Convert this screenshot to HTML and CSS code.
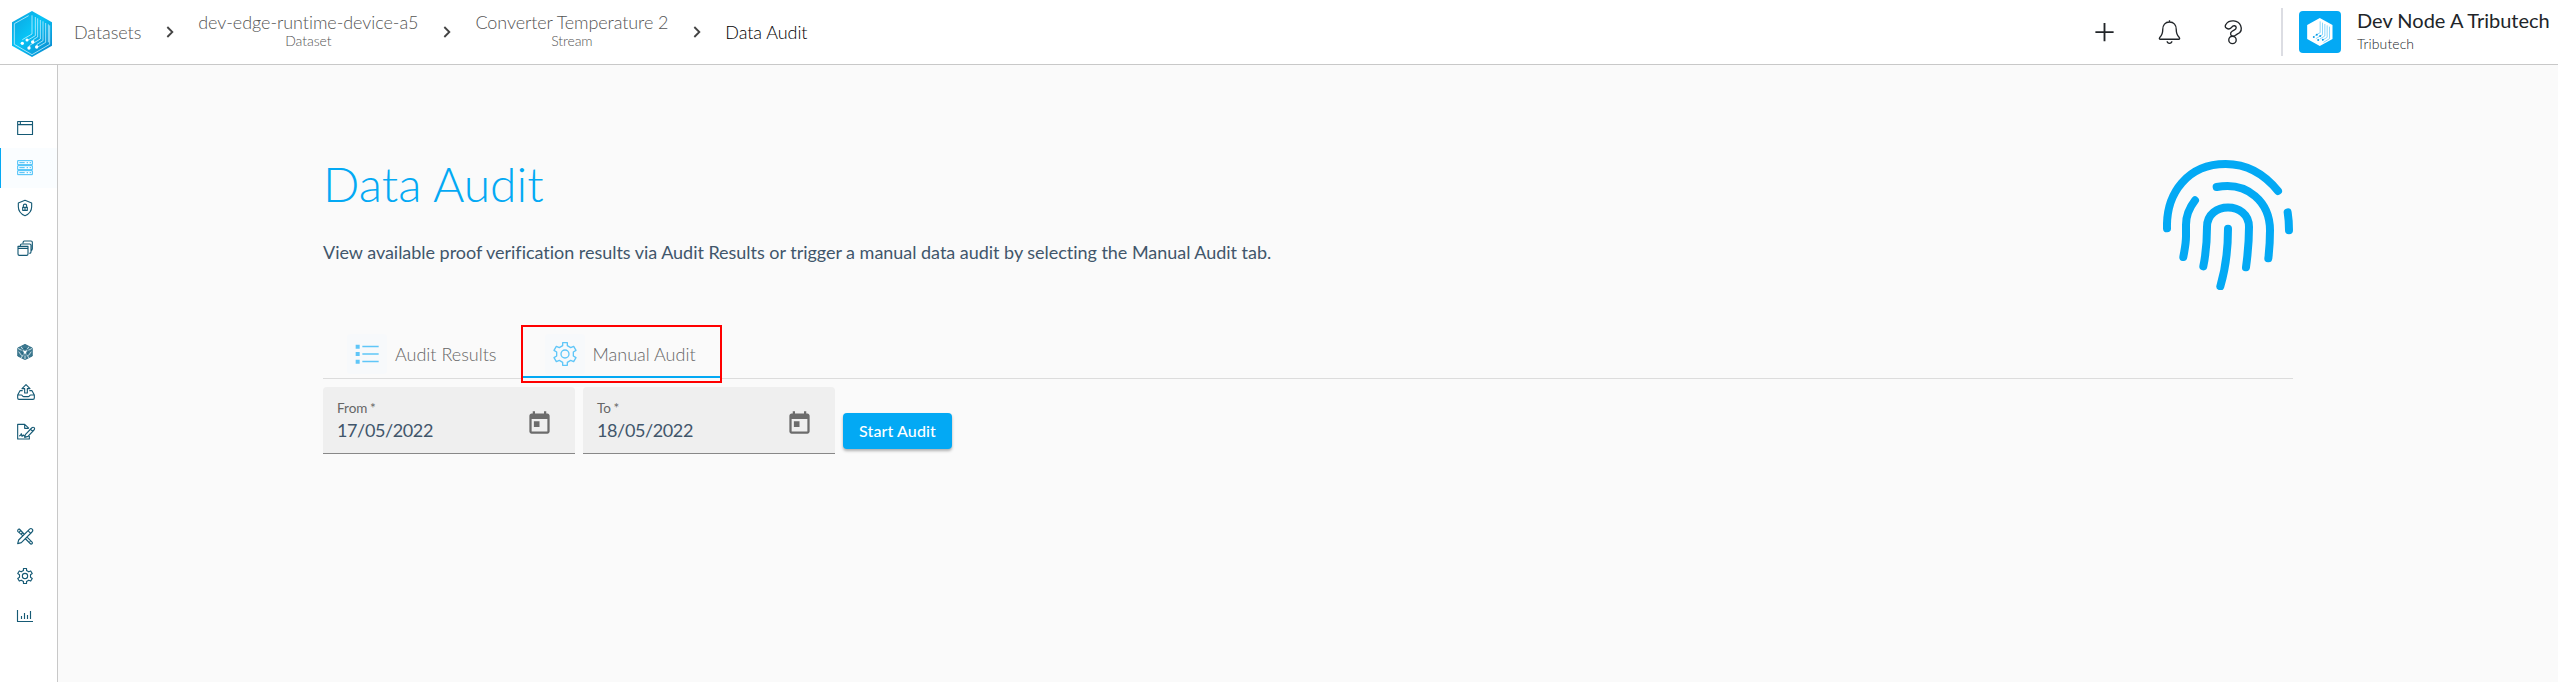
FILE: index.html
```html
<!DOCTYPE html>
<html lang="en">
<head>
<meta charset="utf-8">
<title>Data Audit</title>
<link rel="stylesheet" href="styles.css">
</head>
<body>
<header class="topbar">
  <svg class="logo" viewBox="36 33 120 138">
    <defs><linearGradient id="lg" x1="0" y1="0" x2="1" y2="1"><stop offset="0" stop-color="#0da0dc"/><stop offset=".45" stop-color="#08c4f6"/><stop offset="1" stop-color="#0880c8"/></linearGradient></defs>
    <path d="M96 33l60 34v70l-60 34-60-34V67z" fill="url(#lg)"/>
    <g fill="none" stroke="#c5f0ff" stroke-width="2.4">
      <path d="M86 47L43 71v62l53 31 53-31V76"/>
      <path d="M96 46v56L67 119M106 51v56L81 122M113 55v56l-12 7v8M121 60v57l-32 19v6M129 64v58l-18 11v7M137 69v58l-24 14M145 73v54"/>
    </g>
    <g fill="#fff"><circle cx="67" cy="130" r="5"/><circle cx="81" cy="120" r="4.500"/><circle cx="98" cy="126" r="5"/><circle cx="87" cy="144" r="5"/><circle cx="110" cy="141" r="5"/></g>
  </svg>
  <nav class="crumbs">
    <a class="crumb c1"><span>Datasets</span></a>
    <svg class="chev" viewBox="0 0 24 36"><path d="M4 3l15 15L4 33" /></svg>
    <a class="crumb c2"><span>dev-edge-runtime-device-a5</span><small>Dataset</small></a>
    <svg class="chev" viewBox="0 0 24 36"><path d="M4 3l15 15L4 33" /></svg>
    <a class="crumb c3"><span>Converter Temperature 2</span><small>Stream</small></a>
    <svg class="chev" viewBox="0 0 24 36"><path d="M4 3l15 15L4 33" /></svg>
    <a class="crumb current"><span>Data Audit</span></a>
  </nav>
  <div class="tools">
    <svg class="tool" viewBox="65 57 80 80"><path d="M105 69v54M78 96h54" stroke-width="5.500"/></svg>
    <svg class="tool" viewBox="258 57 80 80"><path d="M298 61v5M298 66c-13 0-20 10-20 22 0 13-3 18-9 24-2 3-1 5 2 5h54c3 0 4-2 2-5-6-6-9-11-9-24 0-12-7-22-20-22zM291 123c1 8 13 8 14 0" stroke-width="4"/></svg>
    <svg class="tool" viewBox="451 57 80 80"><path d="M470 84c-5-2-4-8-1-12 10-14 36-12 43 4 6 14-1 22-10 26-6 3-7 6-13 6-7 0-9-10-3-14 5-4 13-5 13-11 0-7-9-8-13-2-4 6-11 6-16 3z" stroke-width="4"/><circle cx="488" cy="119" r="11" stroke-width="4"/></svg>
  </div>
  <div class="account">
    <div class="avatar">
      <svg viewBox="712 54 77 84"><path d="M750 54l38 21v42l-38 21-38-21V75z" fill="#fff"/><path d="M751 64v34l-16 9M758 68v36l-20 12M765 72v36l-15 9M772 76v36l-15 9M779 80v36l-18 11" fill="none" stroke="#55c3f7" stroke-width="2"/><g fill="#0a9ee8"><circle cx="732" cy="111" r="3"/><circle cx="741" cy="104" r="3"/><circle cx="751" cy="108" r="3"/><circle cx="745" cy="120" r="3"/><circle cx="759" cy="119" r="3"/></g></svg>
    </div>
    <div class="who"><strong>Dev Node A Tributech</strong><span>Tributech</span></div>
  </div>
</header>
<div class="body">
  <aside class="side">
    <div class="group">
      <svg class="item" viewBox="0 24 171 120"><path d="M53 64.500h44.500v39H53zM53 74h44M61 65v8"/></svg>
      <svg class="item active" viewBox="0 144 171 120"><path d="M53 182h44v12H53zM53 197h44v12H53zM53 212h44v12H53zM58 188h16M58 203h16M58 218h16M80 188h4M80 203h4M80 218h4M89 188h4M89 203h4M89 218h4"/></svg>
      <svg class="item" viewBox="0 264 171 120"><path d="M75 301l20 8v11c0 14-8 22-20 27-12-5-20-13-20-27v-11z"/><path d="M68 322h14v9H68zM70 321v-4c0-6 10-6 10 0v4M75 323v6"/></svg>
      <svg class="item" viewBox="0 384 171 120"><path d="M54 439h30v23c0 3-1 4-4 4H58c-3 0-4-1-4-4zM54 445h30M61 437c0-3 1-5 4-5h24c3 0 4 1 4 4v20c0 3-2 4-5 4M69 430c0-5 1-7 4-7h20c3 0 4 1 4 4v19c0 4-2 5-4 6"/></svg>
    </div>
    <div class="group">
      <svg class="item" viewBox="0 6 171 120"><path d="M75 43l22 11v24L75 89 53 78V54z" fill="#3e7a91" stroke-width="2"/><path d="M53 55l22 11 22-11M75 66v22M63 50l24 34M87 50L63 84M56 65l9 12M94 65l-9 12" stroke="#e8f3f6" stroke-width="2.500"/><path d="M75 55l9 5v10l-9 6-9-6V60z" stroke-width="2"/><circle cx="75" cy="66" r="4" fill="#fff" stroke="none"/></svg>
      <svg class="item" viewBox="0 126 171 120"><path d="M68 182h-8l-7 13v9c0 3 1 4 4 4h42c3 0 4-1 4-4v-9l-7-13h-8M53 195h11c3 0 4 5 7 5h14c3 0 4-5 7-5h11M74 189v-13h-8l12-12 12 12h-8v13z"/></svg>
      <svg class="item" viewBox="0 246 171 120"><path d="M87 295l-13-12H53v44h35v-9M74 284v11h12M76 314l19-20c5-5 12 0 7 6l-18 19-10 3zM92 298l6 6M57 318c4 0 6-4 7-7l2 8 4-4 3 3h4"/></svg>
    </div>
    <div class="group">
      <svg class="item" viewBox="0 18 171 120"><path d="M53 101l3-11 32-32c6-6 14 1 8 8L64 98zM72 72L58 57c-5 0-6 6-4 8l14 12M82 82l15 15c1 4-2 6-5 5L77 87M84 62l8 8M61 63l-3 3M67 69l-3 3M92 92l-3 3"/></svg>
      <svg class="item gear" viewBox="0 138 171 120"><use href="#gear" transform="translate(75 198) scale(.66)"/></svg>
      <svg class="item" viewBox="0 258 171 120"><path d="M52.500 300v34.500H99M64.500 318v9M73.500 309v18M82.500 315v12M91.500 303v24"/></svg>
    </div>
  </aside>
  <main class="main">
    <div class="intro">
      <div>
        <h1>Data Audit</h1>
        <p>View available proof verification results via Audit Results or trigger a manual data audit by selecting the Manual Audit tab.</p>
      </div>
      <svg class="finger" viewBox="99 60 390 390"><path d="M111 265C108 158 174 72 287 72c68 0 120 35 157 81M195 181c-17 22-27 44-27 73v35c0 24-5 43-8 62M260 141c93-18 160 46 160 130 0 34-2 60-5 84M220 379c8-40 11-76 11-118 0-78 126-78 126 0 0 44-4 84-9 121M294 266c0 65-7 119-23 173M473 217c3 18 4 36 4 54"/></svg>
    </div>
    <div class="tabs">
      <div class="tab">
        <span class="tico"><svg viewBox="0 0 120 120"><path d="M46 37.500h49M46 60h49M46 82.500h49"/><path d="M26 32h12v12H26zM26 54h12v12H26zM26 77h12v12H26z" fill="#5fc6f8" stroke="none"/></svg></span>
        <span>Audit Results</span>
      </div>
      <div class="tab selected">
        <span class="tico"><svg viewBox="0 0 120 120"><g transform="translate(60 60)"><g id="gear"><circle r="12"/><path d="M-7-34H7V-25L17-19L26-23L33-11L25-6V6L33 11L26 23L17 19L7 25V34H-7V25L-17 19L-26 23L-33 11L-25 6V-6L-33-11L-26-23L-17-19L-7-25Z" stroke-linejoin="round"/></g></g></svg></span>
        <span>Manual Audit</span>
      </div>
    </div>
    <div class="form">
      <div class="field"><div><label>From *</label><b>17/05/2022</b></div><svg viewBox="0 0 24 24"><path d="M19 3h-1V1h-2v2H8V1H6v2H5c-1.110 0-2 .9-2 2v14c0 1.100.89 2 2 2h14c1.100 0 2-.9 2-2V5c0-1.100-.9-2-2-2zm0 16H5V8h14v11zM7 10h5v5H7z"/></svg></div>
      <div class="field"><div><label>To *</label><b>18/05/2022</b></div><svg viewBox="0 0 24 24"><path d="M19 3h-1V1h-2v2H8V1H6v2H5c-1.110 0-2 .9-2 2v14c0 1.100.89 2 2 2h14c1.100 0 2-.9 2-2V5c0-1.100-.9-2-2-2zm0 16H5V8h14v11zM7 10h5v5H7z"/></svg></div>
      <button class="start">Start Audit</button>
    </div>
  </main>
</div>
</body>
</html>
```
FILE: styles.css
```css
* { box-sizing: border-box; }
body { margin: 0; height: 682px; overflow: hidden; background: #fafafa; font-family: Lato, sans-serif; font-size: 18px; display: flex; flex-direction: column; }
svg { display: block; flex: none; }
.topbar { height: 65px; flex: none; background: #fff; border-bottom: 1px solid #c8c8c8; display: flex; align-items: flex-start; padding: 0 9px 0 12px; }
.logo { width: 40px; height: 46px; margin-top: 11px; }
.crumbs { display: flex; height: 64px; align-items: center; margin-left: 22px; }
.crumb { display: flex; flex-direction: column; align-items: center; font-weight: 300; color: #555; line-height: 22px; white-space: nowrap; letter-spacing: -.06px; }
.crumb small { font-size: 14px; line-height: 16px; margin-top: -1px; }
.crumb.c2, .crumb.c3 { margin-top: -4px; }
.crumb.c2 small, .crumb.c3 small { margin-top: 0; }
.crumb.c3 { letter-spacing: -.09px; }
.crumb.current { color: #000; }
.chev { width: 8px; height: 12px; margin: 0 24px 0 25px; fill: none; stroke: #444; stroke-width: 5.500; }
.tools { display: flex; gap: 37.500px; margin: 19px 0 0 auto; }
.tool { width: 27px; height: 27px; fill: none; stroke: #212529; stroke-linecap: butt; stroke-linejoin: round; }
.account { display: flex; height: 48px; margin: 8px 0 0 34px; border-left: 2px solid #dcdde3; padding: 3px 0 0 16px; }
.avatar { width: 42px; height: 42px; border-radius: 4px; background: #03a9f4; display: grid; place-items: center; }
.avatar svg { width: 26px; height: 28px; }
.who { display: flex; flex-direction: column; margin-left: 16px; width: 192px; white-space: nowrap; color: #212529; }
.who strong { font-weight: 400; font-size: 20px; line-height: 20px; margin-top: -1px; }
.who span { font-weight: 300; font-size: 14px; line-height: 16px; margin-top: 6px; letter-spacing: .1px; }
.body { flex: 1; display: flex; min-height: 0; }
.side { width: 58px; flex: none; background: #fff; border-right: 1px solid #c8c8c8; padding-top: 43px; display: flex; flex-direction: column; gap: 64px; }
.item { width: 57px; height: 40px; fill: none; stroke: #165a75; stroke-width: 3.400; stroke-linejoin: round; }
.item.gear { stroke-width: 5.200; }
.item.active { background: #fafdff; stroke: #35b8f5; stroke-width: 2.800; box-shadow: inset 1px 0 #03a9f4; }
.main { flex: 1; padding: 90px 265px 0 265px; }
.intro { display: flex; justify-content: space-between; align-items: flex-start; height: 170px; }
h1 { margin: 0; font-size: 48px; line-height: 58px; font-weight: 300; color: #03a9f4; }
p { margin: 28px 0 0; line-height: 22px; color: #41566b; letter-spacing: -.03px; }
.finger { width: 130px; height: 130px; margin-top: 5px; fill: none; stroke: #03a9f4; stroke-width: 24; stroke-linecap: round; stroke-linejoin: round; }
.tabs { display: flex; height: 54px; border-bottom: 1px solid #dcdcdc; }
.tab { display: flex; align-items: center; gap: 8px; padding: 0 24px; height: 58px; color: #666; font-weight: 300; white-space: nowrap; }
.tab.selected { padding-right: 26px; outline: 2px solid #f00; outline-offset: -2px; box-shadow: inset 0 -5px #fafafa, inset 0 -7px #03a9f4; }
.tico { width: 40px; height: 40px; border-radius: 4px; background: #f7f9fb; }
.tico svg { width: 40px; height: 40px; fill: none; stroke: #5fc6f8; stroke-width: 4; }
.form { display: flex; gap: 8px; margin-top: 8px; }
.field { width: 252px; height: 67px; background: #efefef; border-radius: 4px 4px 0 0; border-bottom: 1px solid #888; display: flex; justify-content: space-between; padding: 12px 22px 0 14px; }
.field div { display: flex; flex-direction: column; }
.field label { font-size: 13.500px; line-height: 18px; color: #666; word-spacing: -1px; }
.field b { font-weight: 400; line-height: 22px; margin-top: 2px; color: #41566b; letter-spacing: -.38px; }
.field svg { width: 27px; height: 27px; margin-top: 11px; fill: #6c6c6c; }
.start { width: 109px; height: 36px; margin-top: 26px; padding: 0 0 1px; border: 0; border-radius: 4px; background: #03a9f4; color: #fff; font: 500 16px Lato, sans-serif; letter-spacing: .12px; box-shadow: 0 2px 3px rgba(0,0,0,.3); }
```
